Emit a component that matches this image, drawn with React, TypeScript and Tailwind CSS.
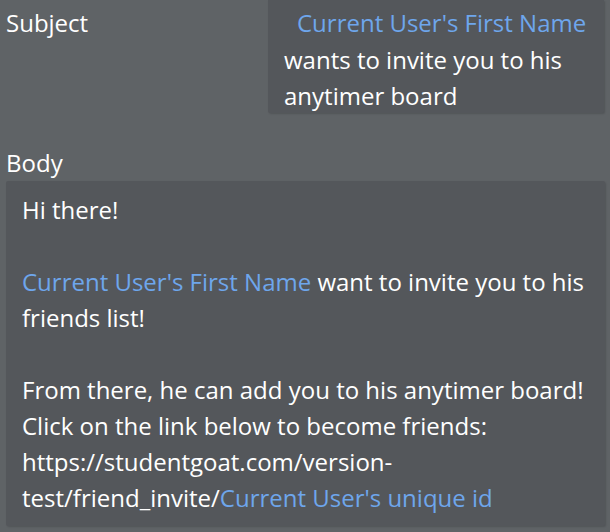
import React from 'react';

const blue = 'text-[#6ea6ec]';

export default function App() {
  return (
    <div className="w-[610px] h-[532px] overflow-hidden bg-[#5f6366] text-white text-[24px] leading-[36px] font-['Open_Sans',sans-serif]">
      {/* Subject row */}
      <div className="flex items-start">
        <div className="pl-[6px] pt-[5px]">Subject</div>
        <div className="ml-auto mr-[6px] w-[336px] bg-[#54575b] rounded-b-[2px] shadow-[1px_1px_2px_rgba(0,0,0,0.15)] pl-4 pr-3 pt-[5px] leading-[36.5px] h-[113px]">
          <span className={`${blue} pl-[13px]`}>Current User's First Name</span> wants to invite you to his anytimer board
        </div>
      </div>

      {/* Body */}
      <div className="pl-[6px] pt-[32px]">Body</div>
      <div className="ml-[6px] mr-[5px] bg-[#54575b] rounded-[2px] shadow-[1px_1px_2px_rgba(0,0,0,0.15)] pl-4 pr-3 pt-[11px] pb-[10px]">
        <p>Hi there!</p>
        <p>&nbsp;</p>
        <p>
          <span className={blue}>Current User's First Name</span> want to invite you to his friends list!
        </p>
        <p>&nbsp;</p>
        <p>From there, he can add you to his anytimer board!</p>
        <p>Click on the link below to become friends:</p>
        <p>
          https://studentgoat.com/version-test/friend_invite/<span className={blue}>Current User's unique id</span>
        </p>
      </div>
    </div>
  );
}
